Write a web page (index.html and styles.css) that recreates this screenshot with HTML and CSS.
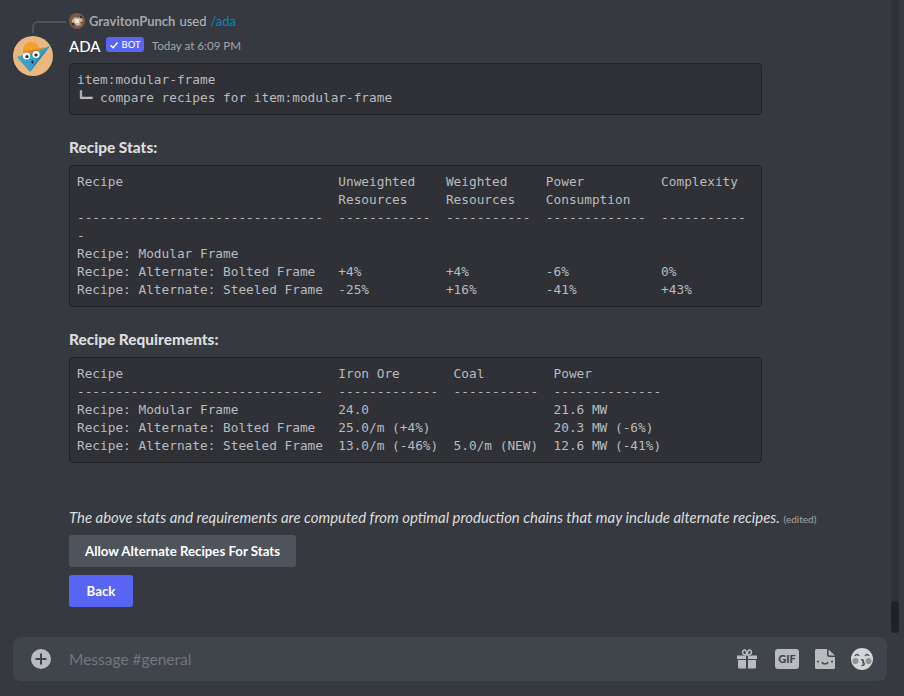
FILE: index.html
```html
<!DOCTYPE html>
<html lang="en">
<head>
  <meta charset="UTF-8">
  <meta name="viewport" content="width=device-width, initial-scale=1.0">
  <title>#general</title>
  <link rel="stylesheet" href="styles.css">
</head>
<body>
  <div class="chat">
    <div class="messages">
      <div class="reply">
        <div class="spine"></div>
        <svg class="reply-avatar" viewBox="0 0 16 16">
          <circle cx="8" cy="8" r="8" fill="#7a5a4a"/>
          <path d="M3 7l3-3 3 1 3-1 2 4-3 1 1 3-4 1-2-2-3-1z" fill="#c9b7a0"/>
          <path d="M6 6h4v4H6z" fill="#f0e6d6"/>
          <circle cx="4" cy="11" r="1.500" fill="#3c2a24"/>
          <circle cx="12" cy="4" r="1.200" fill="#3c2a24"/>
        </svg>
        <span class="reply-name">GravitonPunch</span>
        <span class="reply-used">used</span>
        <span class="reply-cmd">/ada</span>
      </div>
      <div class="message">
        <svg class="avatar" viewBox="0 0 40 40">
          <circle cx="20" cy="20" r="20" fill="#e9b77f"/>
          <path d="M4 21L37 10 17 36z" fill="#3ba0c4"/>
          <path d="M17 36L37 10 24 23z" fill="#2f86ad"/>
          <path d="M10 14C10.500 8 16 5 20 6 24 7 26 10 26.500 13L31 11 25 16 11 18z" fill="#f0a22e"/>
          <path d="M10 15L26 13 31 11 25 16 11 18z" fill="#d9812a"/>
          <circle cx="13.500" cy="20" r="3.600" fill="#fff"/>
          <circle cx="23" cy="18.500" r="3.600" fill="#fff"/>
          <circle cx="14" cy="20.500" r="1.600" fill="#23272a"/>
          <circle cx="23" cy="19" r="1.600" fill="#23272a"/>
          <ellipse cx="19.500" cy="26" rx="1.200" ry="1.700" fill="#2c2f33"/>
        </svg>
        <div class="content">
          <div class="author">
            <span class="username">ADA</span>
            <span class="bot-tag">
              <svg class="bot-check" viewBox="0 0 10 10"><path d="M1.500 5.200L4 7.700 8.600 2.600" fill="none" stroke="#fff" stroke-width="1.500"/></svg>
              BOT
            </span>
            <span class="timestamp">Today at 6:09 PM</span>
          </div>

          <pre class="code first-code">item:modular-frame
<span class="tree">┗━</span> compare recipes for item:modular-frame</pre>

          <p class="heading">Recipe Stats:</p>
          <pre class="code">Recipe                            Unweighted    Weighted     Power          Complexity
                                  Resources     Resources    Consumption
--------------------------------  ------------  -----------  -------------  -----------
-
Recipe: Modular Frame
Recipe: Alternate: Bolted Frame   +4%           +4%          -6%            0%
Recipe: Alternate: Steeled Frame  -25%          +16%         -41%           +43%</pre>

          <p class="heading">Recipe Requirements:</p>
          <pre class="code">Recipe                            Iron Ore       Coal         Power
--------------------------------  -------------  -----------  --------------
Recipe: Modular Frame             24.0                        21.6 MW
Recipe: Alternate: Bolted Frame   25.0/m (+4%)                20.3 MW (-6%)
Recipe: Alternate: Steeled Frame  13.0/m (-46%)  5.0/m (NEW)  12.6 MW (-41%)</pre>

          <p class="note"><em>The above stats and requirements are computed from optimal production chains that may include alternate recipes.</em> <span class="edited">(edited)</span></p>

          <div class="button-row"><button class="btn btn-grey">Allow Alternate Recipes For Stats</button></div>
          <div class="button-row"><button class="btn btn-blurple">Back</button></div>
        </div>
      </div>
    </div>
    <div class="scrollbar"><div class="thumb"></div></div>
  </div>

  <div class="composer">
    <svg class="plus" viewBox="0 0 20 20">
      <circle cx="10" cy="10" r="10" fill="#b9bbbe"/>
      <path d="M10 4.500v11M4.500 10h11" stroke="#40444b" stroke-width="2"/>
    </svg>
    <span class="placeholder">Message #general</span>
    <div class="composer-icons">
      <svg class="icon gift" viewBox="0 0 20 20">
        <path d="M0 6.500h9v3.500H0zM11 6.500h9v3.500h-9zM1 11h8v8.500H2.500A1.500 1.500 0 0 1 1 18zM11 11h8v7a1.500 1.500 0 0 1-1.500 1.500H11z" fill="#b9bbbe"/>
        <path d="M10 6C8 6 5.500 5.500 5.500 3.300 5.500 1.500 7.800 0 9 2zM10 6c2 0 4.500-.5 4.500-2.700C14.500 1.500 12.200 0 11 2z" fill="none" stroke="#b9bbbe" stroke-width="1.500"/>
      </svg>
      <span class="gif">GIF</span>
      <svg class="icon" viewBox="0 0 20 20">
        <path d="M1.500 0H12v5.500A2.500 2.500 0 0 0 14.500 8H20v10.500a1.500 1.500 0 0 1-1.500 1.500h-17A1.500 1.500 0 0 1 0 18.500v-17A1.500 1.500 0 0 1 1.500 0z" fill="#b9bbbe"/>
        <path d="M13.500 0.500L20 6.500h-5a1.500 1.500 0 0 1-1.500-1.500z" fill="#b9bbbe"/>
        <circle cx="3" cy="12.500" r="1" fill="#40444b"/>
        <circle cx="17" cy="12.500" r="1" fill="#40444b"/>
        <path d="M7 13c.5 2.500 5.500 2.500 6 0" fill="none" stroke="#40444b" stroke-width="1.300"/>
      </svg>
      <svg class="icon emoji" viewBox="0 0 22 22">
        <circle cx="11" cy="11" r="11" fill="#d4d5d6"/>
        <circle cx="4.500" cy="13" r="3" fill="#8f9092"/>
        <circle cx="17.500" cy="13" r="3" fill="#8f9092"/>
        <path d="M4 8c1-2 3-2 4 0M14 8c1-2 3-2 4 0" fill="none" stroke="#4f5156" stroke-width="1.300"/>
        <path d="M10 12c3-1 3 2.500 1 2.500 3 0 3 3-.5 3" fill="none" stroke="#4f5156" stroke-width="1.500"/>
      </svg>
    </div>
  </div>
</body>
</html>
```

FILE: styles.css
```css
body {
  margin: 0;
  height: 696px;
  overflow: hidden;
  display: flex;
  flex-direction: column;
  background-color: #36393f;
  font-family: Lato, "Open Sans", sans-serif;
  color: #dcddde;
}

.chat {
  display: flex;
  height: 634px;
}

.messages {
  flex: 1;
  padding: 13px 0 0 13px;
}

.reply {
  display: flex;
  align-items: center;
  height: 16px;
  font-size: 13px;
  margin-bottom: 5px;
  color: #b9bbbe;
}

.spine {
  width: 34px;
  height: 12px;
  margin: 12px 3px 0 19px;
  border-left: 2px solid #4f545c;
  border-top: 2px solid #4f545c;
  border-top-left-radius: 6px;
  box-sizing: border-box;
}

.reply-avatar {
  width: 16px;
  height: 16px;
  margin-right: 4px;
}

.reply-name {
  font-weight: 700;
  color: #a3a6aa;
  margin-right: 4px;
}

.reply-used {
  margin-right: 4px;
}

.reply-cmd {
  color: #0a85b8;
}

.message {
  display: flex;
}

.avatar {
  width: 40px;
  height: 40px;
  margin: 2px 16px 0 0;
  flex-shrink: 0;
}

.content {
  width: 693px;
}

.author {
  display: flex;
  align-items: center;
  height: 23px;
}

.username {
  font-size: 15px;
  font-weight: 500;
  color: #fff;
}

.bot-tag {
  display: flex;
  align-items: center;
  height: 15px;
  margin: 0 0 2px 5px;
  padding: 0 3px 0 3px;
  background-color: #5865f2;
  border-radius: 3px;
  color: #fff;
  font-size: 9.500px;
  font-weight: 500;
}

.bot-check {
  width: 10px;
  height: 10px;
  margin-right: 3px;
}

.timestamp {
  margin-left: 8px;
  font-size: 11.600px;
  color: #a3a6aa;
}

.code {
  margin: 0;
  padding: 7px;
  background-color: #2f3136;
  border: 1px solid #202225;
  border-radius: 4px;
  font-family: "DejaVu Sans Mono", monospace;
  font-size: 12.780px;
  line-height: 18px;
  color: #b9bbbe;
  overflow: hidden;
}

.first-code {
  margin-top: 6px;
}

.tree {
  letter-spacing: 0;
}

.heading {
  margin: 23px 0 9px;
  height: 18px;
  line-height: 18px;
  font-size: 15.400px;
  font-weight: 900;
  color: #dcddde;
}

.note {
  margin: 45px 0 9px;
  height: 18px;
  line-height: 18px;
  font-size: 14.930px;
  white-space: nowrap;
}

.edited {
  font-size: 10px;
  color: #a3a6aa;
}

.button-row {
  display: flex;
  margin-bottom: 8px;
}

.btn {
  height: 32px;
  padding: 0 16px;
  border: none;
  border-radius: 3px;
  color: #fff;
  font-family: Lato, "Open Sans", sans-serif;
  font-size: 13.240px;
  font-weight: 700;
}

.btn-grey {
  background-color: #4f545c;
}

.btn-blurple {
  width: 64px;
  background-color: #5865f2;
}

.scrollbar {
  width: 8px;
  margin-right: 5px;
  padding-top: 601px;
  box-sizing: border-box;
  height: 633px;
  background-color: #2e3338;
  border-radius: 0 0 4px 4px;
}

.thumb {
  height: 32px;
  background-color: #202225;
  border-radius: 4px;
}

.composer {
  display: flex;
  align-items: center;
  height: 44px;
  margin: 3px 17px 0 13px;
  padding: 0 14px 0 18px;
  background-color: #40444b;
  border-radius: 8px;
}

.plus {
  width: 20px;
  height: 20px;
  margin-right: 18px;
}

.placeholder {
  flex: 1;
  font-size: 15.500px;
  color: #72767d;
}

.composer-icons {
  display: flex;
  align-items: center;
  gap: 16px;
}

.icon {
  width: 20px;
  height: 20px;
}

.gift {
  margin-right: 2px;
}

.gif {
  width: 24px;
  height: 20px;
  line-height: 20px;
  text-align: center;
  background-color: #b9bbbe;
  border-radius: 3px;
  color: #40444b;
  font-size: 11px;
  font-weight: 900;
}

.emoji {
  width: 22px;
  height: 22px;
}
```
